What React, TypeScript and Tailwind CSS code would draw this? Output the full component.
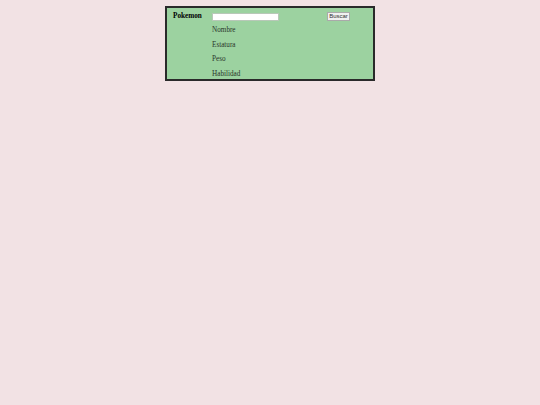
import React from 'react';

export default function App() {
  const rows = ['Nombre', 'Estatura', 'Peso', 'Habilidad'];
  return (
    <div className="min-h-[405px] w-full bg-[#f2e2e4] pt-[6px] font-['Liberation_Serif',serif] text-[7.2px] text-[#2a352a]">
      <div className="mx-auto h-[75px] w-[210px] overflow-hidden border-2 border-[#2a2a2a] bg-[#9cd2a0] pl-[6px] pt-[1.5px]">
        <div className="flex h-[14px] items-center">
          <span className="w-[39px] font-bold text-black">Pokemon</span>
          <input
            className="h-[8px] w-[67px] border border-[#b8c8b8] bg-white outline-none"
            type="text"
          />
          <button className="ml-[48px] flex h-[9px] w-[23px] items-center justify-center border border-[#aaa] bg-[#f0f0f0] font-['Liberation_Sans',sans-serif] text-[6px] text-[#333]">
            Buscar
          </button>
        </div>
        {rows.map((r) => (
          <div key={r} className="flex h-[14.5px] items-center pl-[39px]">
            {r}
          </div>
        ))}
      </div>
    </div>
  );
}
